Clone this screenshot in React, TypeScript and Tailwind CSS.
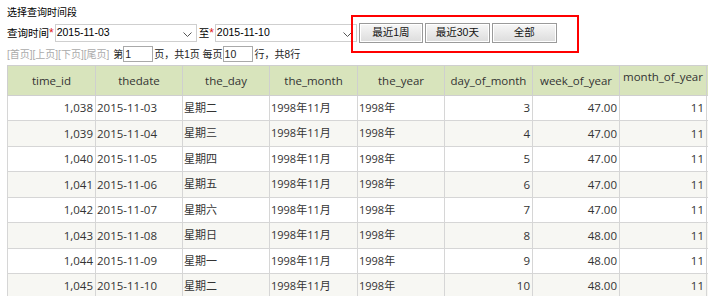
import React from "react";

const cols = [
  { name: "time_id", w: 88 },
  { name: "thedate", w: 87 },
  { name: "the_day", w: 87 },
  { name: "the_month", w: 88 },
  { name: "the_year", w: 87 },
  { name: "day_of_month", w: 88 },
  { name: "week_of_year", w: 87 },
  { name: "month_of_year", w: 88 },
];

const days = ["星期二", "星期三", "星期四", "星期五", "星期六", "星期日", "星期一", "星期二"];
const rows = Array.from({ length: 8 }, (_, i) => ({
  id: (1038 + i).toLocaleString("en-US"),
  date: `2015-11-${String(3 + i).padStart(2, "0")}`,
  day: days[i],
  month: "1998年11月",
  year: "1998年",
  dom: String(3 + i),
  woy: i < 5 ? "47.00" : "48.00",
  moy: "11",
}));
const rowH = [25, 26, 25, 26, 25, 26, 25, 25];

function Chevron() {
  return (
    <svg width="9" height="5" viewBox="0 0 9 5" className="absolute right-[4px] top-[7px]">
      <polyline points="0.5,0.5 4.5,4.5 8.5,0.5" fill="none" stroke="#555" strokeWidth="1" />
    </svg>
  );
}

function Select({ value, w }: { value: string; w: string }) {
  return (
    <div className={`relative h-[18px] ${w} border border-[#cfcfcf] bg-white flex items-center pl-[1px] text-[10.5px] text-black`} style={{ fontFamily: '"Liberation Sans", Arial, sans-serif' }}>
      {value}
      <Chevron />
    </div>
  );
}

function Btn({ label, w }: { label: string; w: string }) {
  return (
    <div className={`h-[20px] ${w} border border-[#9a9a9a] bg-gradient-to-b from-[#f7f7f7] to-[#dcdcdc] shadow-[inset_0_0_0_1px_#ffffff] flex items-center justify-center text-[10.5px] text-[#111]`}>
      {label}
    </div>
  );
}

export default function App() {
  const font = '"Liberation Sans", Arial, "Noto Sans CJK SC", sans-serif';
  return (
    <div className="relative w-[708px] h-[296px] overflow-hidden bg-white text-black" style={{ fontFamily: font }}>
      <div className="h-[23px] pl-[7px] pt-[6px] text-[10px] leading-[14px]">选择查询时间段</div>
      <div className="h-[20px] pl-[7px] flex items-center">
        <span className="text-[10.5px] leading-none">查询时间</span>
        <span className="text-[12px] text-[#e02020] leading-none mr-[1px]">*</span>
        <Select value="2015-11-03" w="w-[142px]" />
        <span className="text-[10.5px] leading-none ml-[2px]">至</span>
        <span className="text-[12px] text-[#e02020] leading-none mr-[1px]">*</span>
        <Select value="2015-11-10" w="w-[142px]" />
        <div className="flex gap-[2px] ml-[2px]">
          <Btn label="最近1周" w="w-[64px]" />
          <Btn label="最近30天" w="w-[65px]" />
          <Btn label="全部" w="w-[65px]" />
        </div>
      </div>
      <div className="h-[22px] pl-[7px] flex items-center text-[10px] text-[#222]">
        <span className="text-[#aaaaaa]">[首页][上页][下页][尾页]</span>
        <span className="ml-[4px]">第</span>
        <div className="h-[16px] w-[30px] border border-[#a9a9a9] bg-white text-[10.5px] leading-[14px] pl-[1px]">1</div>
        <span className="ml-[1px]">页，共1页 每页</span>
        <div className="h-[16px] w-[30px] border border-[#a9a9a9] bg-white text-[10.5px] leading-[14px] pl-[1px]">10</div>
        <span className="ml-[2px]">行，共8行</span>
      </div>
      <div className="ml-[7px] text-[11.5px] text-[#333]" style={{ fontFamily: '"Open Sans", "Noto Sans CJK SC", sans-serif' }}>
        <div className="flex h-[31px] bg-[#d8e4bc] border-t border-b border-[#cfcfcf]">
          {cols.map((c, i) => (
            <div
              key={c.name}
              className={`h-full border-l border-[#cfcfcf] flex justify-center ${i === 7 ? "border-r items-start pt-[2px]" : "items-center"}`}
              style={{ width: c.w }}
            >
              {c.name}
            </div>
          ))}
        </div>
        {rows.map((r, ri) => {
          const vals = [r.id, r.date, r.day, r.month, r.year, r.dom, r.woy, r.moy];
          const right = [true, false, false, false, false, true, true, true];
          const cjk = [false, false, true, true, true, false, false, false];
          return (
            <div
              key={ri}
              className={`flex border-b border-[#d6d6d6] ${ri % 2 === 1 ? "bg-[#f7f7f3]" : "bg-white"}`}
              style={{ height: rowH[ri] }}
            >
              {vals.map((v, ci) => (
                <div
                  key={ci}
                  className={`h-full border-l border-[#d6d6d6] flex items-center ${right[ci] ? "justify-end pr-[2px]" : "justify-start pl-[1px]"} ${cjk[ci] ? "text-[11px]" : ""} ${ci === 7 ? "border-r" : ""}`}
                  style={{ width: cols[ci].w }}
                >
                  {v}
                </div>
              ))}
            </div>
          );
        })}
      </div>
      <div className="absolute left-[351px] top-[15px] w-[228px] h-[38px] border-2 border-[#ff0000]" />
    </div>
  );
}
